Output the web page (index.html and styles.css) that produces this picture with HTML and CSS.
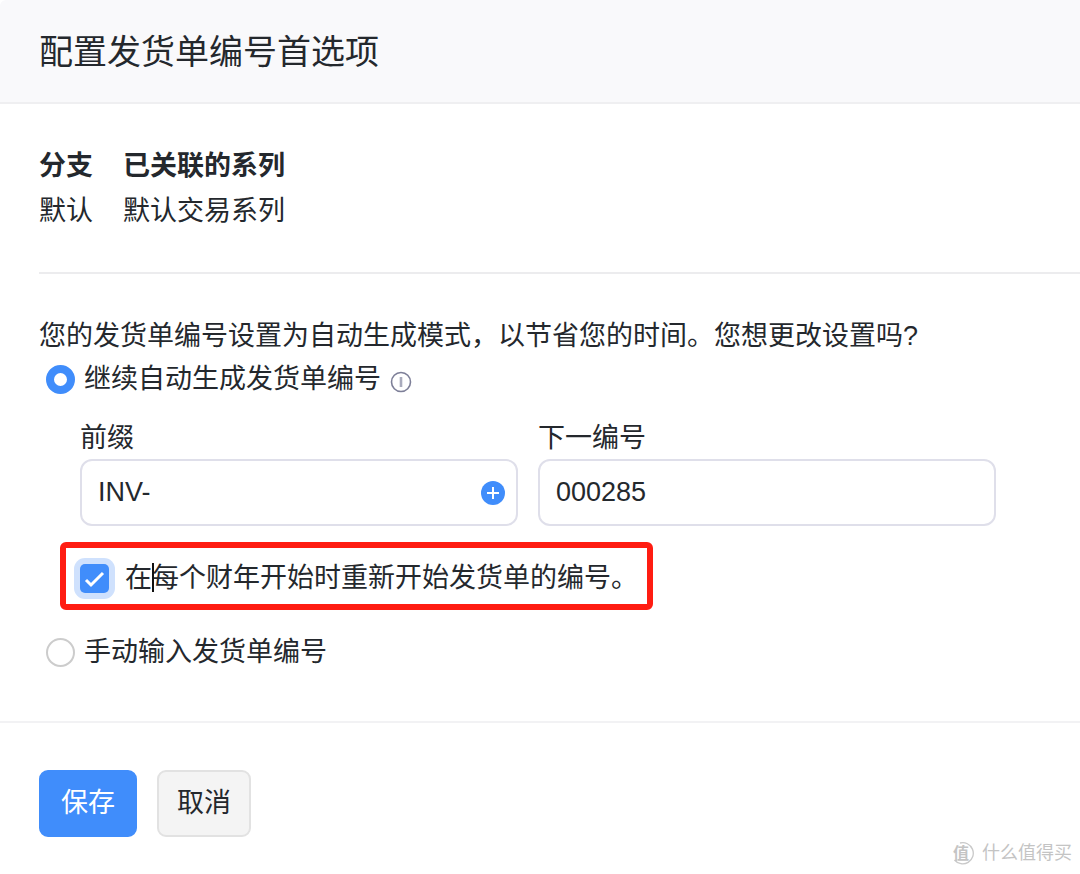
FILE: index.html
```
<!DOCTYPE html>
<html lang="zh-CN">
<head>
    <meta charset="UTF-8">
    <meta name="viewport" content="width=device-width, initial-scale=1.0">
    <title>配置发货单编号首选项</title>
    <link rel="stylesheet" href="styles.css">
</head>
<body>
    <form class="dialog">
        <header class="dialog-header">
            <h1>配置发货单编号首选项</h1>
        </header>
        <main class="dialog-body">
            <table class="series">
                <thead>
                    <tr><th scope="col">分支</th><th scope="col">已关联的系列</th></tr>
                </thead>
                <tbody>
                    <tr><td>默认</td><td>默认交易系列</td></tr>
                </tbody>
            </table>
            <section class="settings">
                <p class="question">您的发货单编号设置为自动生成模式，以节省您的时间。您想更改设置吗?</p>
                <div class="option">
                    <input type="radio" class="radio" id="autoMode" name="mode" checked>
                    <label for="autoMode">继续自动生成发货单编号</label>
                    <svg class="info" viewBox="0 0 22 22" aria-hidden="true">
                        <circle cx="11" cy="11" r="9.5" fill="none" stroke="#7d7f98" stroke-width="1.6"/>
                        <path d="M11 6v10" stroke="#a9abbd" stroke-width="2.6"/>
                    </svg>
                </div>
                <div class="fields">
                    <div class="field">
                        <label for="prefix">前缀</label>
                        <div class="input-box">
                            <input type="text" id="prefix" value="INV-">
                            <button type="button" class="add" aria-label="添加">
                                <svg viewBox="0 0 24 24" aria-hidden="true">
                                    <circle cx="12" cy="12" r="12" fill="#408dfb"/>
                                    <path d="M12 6v12M6 12h12" stroke="#fff" stroke-width="2"/>
                                </svg>
                            </button>
                        </div>
                    </div>
                    <div class="field">
                        <label for="nextNumber">下一编号</label>
                        <div class="input-box">
                            <input type="text" id="nextNumber" value="000285">
                        </div>
                    </div>
                </div>
                <div class="restart">
                    <input type="checkbox" class="checkbox" id="restart" checked>
                    <label for="restart">在<span class="caret"></span>每个财年开始时重新开始发货单的编号。</label>
                </div>
                <div class="option">
                    <input type="radio" class="radio" id="manualMode" name="mode">
                    <label for="manualMode">手动输入发货单编号</label>
                </div>
            </section>
        </main>
        <footer class="dialog-footer">
            <button type="button" class="btn btn-save">保存</button>
            <button type="button" class="btn btn-cancel">取消</button>
        </footer>
    </form>
    <div class="watermark">
        <svg viewBox="0 0 24 24" aria-hidden="true">
            <path d="M9 2A10.6 10.6 0 1 1 3.5 19" fill="none" stroke="#c9c9c9" stroke-width="1.3"/>
            <text x="2" y="18" font-size="16" font-weight="bold" fill="#c4c4c4">值</text>
        </svg>
        <span>什么值得买</span>
    </div>
</body>
</html>
```

FILE: styles.css
```
* {
    box-sizing: border-box;
}
body {
    margin: 0;
    background-color: #fff;
    color: #24282d;
    font-family: "Liberation Sans", "Noto Sans CJK SC", sans-serif;
    font-size: 27px;
    line-height: 43px;
}
input, button {
    font: inherit;
    color: inherit;
}
.dialog {
    border-top-left-radius: 6px;
    overflow: hidden;
}
.dialog-header {
    padding: 28px 39px 26px;
    background-color: #f9f9fb;
    border-bottom: 2px solid #efeff1;
}
.dialog-header h1 {
    margin: 0;
    font-size: 34px;
    font-weight: normal;
    line-height: 48px;
}
.dialog-body {
    padding: 40px 0 47px 39px;
    border-bottom: 2px solid #f2f2f4;
}
.series {
    border-collapse: collapse;
}
.series th, .series td {
    height: 45px;
    padding: 0 30px 0 0;
    text-align: left;
}
.settings {
    margin-top: 38px;
    padding-top: 41px;
    border-top: 2px solid #ececee;
}
.question {
    margin: 0;
}
.option {
    display: flex;
    align-items: center;
    gap: 9px;
    padding-left: 7px;
}
.radio, .checkbox {
    appearance: none;
    flex: none;
    width: 29px;
    height: 29px;
    margin: 0;
}
.radio {
    border: 2px solid #ccc;
    border-radius: 50%;
    background-color: #fff;
}
.radio:checked {
    border: 8px solid #408dfb;
}
.info {
    width: 22px;
    height: 22px;
    margin-top: 4px;
}
.fields {
    display: grid;
    grid-template-columns: 438fr 458fr;
    gap: 20px;
    padding: 17px 84px 0 41px;
}
.field label {
    display: block;
    line-height: 41px;
}
.input-box {
    display: flex;
    align-items: center;
    height: 67px;
    padding: 0 11px 0 16px;
    border: 2px solid #dfdfea;
    border-radius: 12px;
}
.input-box input {
    flex: 1;
    min-width: 0;
    padding: 0;
    border: none;
    outline: none;
    background: none;
}
.add {
    width: 24px;
    height: 24px;
    padding: 0;
    border: none;
    background: none;
    cursor: pointer;
}
.add svg {
    display: block;
}
.restart {
    display: flex;
    align-items: center;
    gap: 16px;
    width: fit-content;
    height: 68px;
    margin: 16px 0 21px 21px;
    padding: 4px 9px 0 14px;
    border: 6px solid #ff1d12;
    border-radius: 6px;
}
.checkbox {
    border-radius: 5px;
    background: #408dfb url("data:image/svg+xml,%3Csvg xmlns='http://www.w3.org/2000/svg' viewBox='0 0 29 29'%3E%3Cpath d='M6 16l5 5L23 9' fill='none' stroke='white' stroke-width='3'/%3E%3C/svg%3E");
    box-shadow: 0 0 0 6px #cfe1fd;
}
.checkbox:not(:checked) {
    background: #fff;
}
.caret {
    position: absolute;
    width: 2px;
    height: 29px;
    margin-top: 6px;
    background-color: #111;
}
.dialog-footer {
    display: flex;
    gap: 20px;
    padding: 47px 39px 36px;
}
.btn {
    height: 67px;
    padding: 0 18px;
    border: 2px solid #e2e2e2;
    border-radius: 9px;
    background-color: #f4f4f4;
    cursor: pointer;
}
.btn-save {
    padding: 0 20px;
    border-color: #408dfb;
    background-color: #408dfb;
    color: #fff;
}
.watermark {
    position: absolute;
    right: 8px;
    bottom: 8px;
    display: flex;
    align-items: center;
    gap: 7px;
    color: #c4c4c4;
    font-size: 18px;
    line-height: 26px;
}
.watermark svg {
    width: 24px;
    height: 24px;
}
```
